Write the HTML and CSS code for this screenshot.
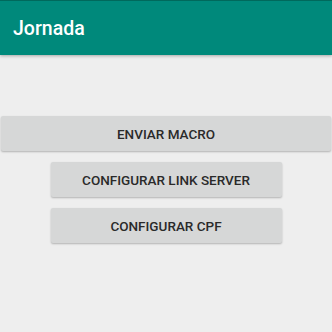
FILE: index.html
```html
<!DOCTYPE html>
<html>
<head>
<meta charset="utf-8">
<link rel="stylesheet" href="styles.css">
</head>
<body>
<div class="app">
  <header class="toolbar"><span class="title">Jornada</span></header>
  <main class="content">
    <button class="btn btn-wide">ENVIAR MACRO</button>
    <button class="btn btn-mid">CONFIGURAR LINK SERVER</button>
    <button class="btn btn-mid">CONFIGURAR CPF</button>
  </main>
</div>
</body>
</html>
```
FILE: styles.css
```css
html, body {
  margin: 0;
  padding: 0;
  background: #eeeeee;
  font-family: Roboto, "Liberation Sans", sans-serif;
}
.app {
  width: 332px;
  height: 332px;
  display: flex;
  flex-direction: column;
}
.toolbar {
  height: 54px;
  background: #00897b;
  border-top: 1px solid #00695c;
  display: flex;
  align-items: center;
  padding-left: 13px;
  box-shadow: 0 1px 3px rgba(0,0,0,0.3);
}
.title {
  color: #ffffff;
  font-size: 19.5px;
  font-weight: 500;
}
.content {
  display: flex;
  flex-direction: column;
  align-items: center;
  padding-top: 61px;
  gap: 11px;
}
.btn {
  font-family: Roboto, "Liberation Sans", sans-serif;
  font-size: 13.5px;
  font-weight: 500;
  color: #2a2a2a;
  background: #d6d7d7;
  border: none;
  border-radius: 2px;
  box-shadow: 0 1px 2px rgba(0,0,0,0.25);
  height: 35px;
  padding: 0;
}
.btn-wide {
  width: 330px;
}
.btn-mid {
  width: 231px;
  height: 35px;
}
```
